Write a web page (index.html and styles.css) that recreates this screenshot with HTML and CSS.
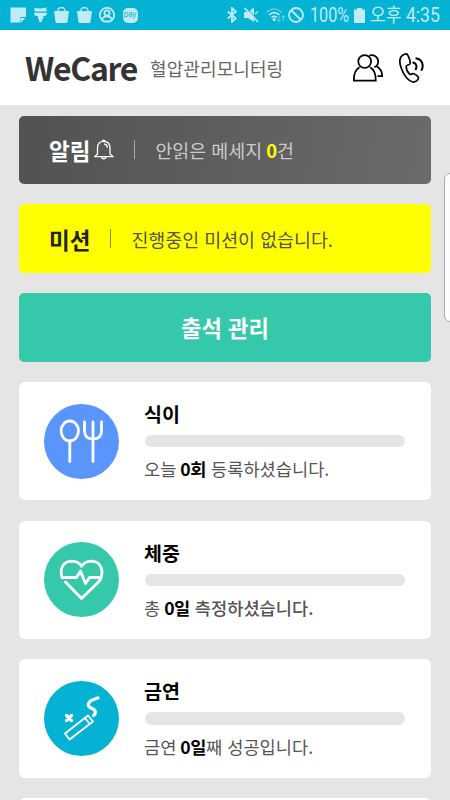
FILE: index.html
```html
<!DOCTYPE html>
<html lang="ko">
<head>
    <meta charset="UTF-8">
    <meta name="viewport" content="width=device-width, initial-scale=1.0">
    <title>WeCare 혈압관리모니터링</title>
    <link rel="stylesheet" href="styles.css">
</head>
<body>
    <div class="status-bar">
        <div class="status-left">
            <svg width="16" height="16" viewBox="0 0 16 16"><path fill="currentColor" d="M.5.500h15.500v9.500h-5.500v5.500H.5z"/><path fill="currentColor" d="M15.500 11l-4.500 4.500V11z"/></svg>
            <svg width="13" height="16" viewBox="0 0 13 16"><path fill="currentColor" d="M.5.500C3 1.500 7 2 12.500.5v4H.5zM0 5.800h13c0 2-.8 3.200-2.500 3.200H9.300v3H8v3H5v-3H4V9H2.500C.8 9 0 7.800 0 5.800z"/></svg>
            <svg width="15" height="16" viewBox="0 0 15 16"><path fill="none" stroke="currentColor" stroke-width="1.300" d="M4 5V3.500a3.500 3 0 0 1 7 0V5"/><path fill="currentColor" d="M0 4h15l-1.400 10.500Q13.400 16 12 16H3Q1.600 16 1.400 14.500z"/></svg>
            <svg width="15" height="16" viewBox="0 0 15 16"><path fill="none" stroke="currentColor" stroke-width="1.300" d="M4 5V3.500a3.500 3 0 0 1 7 0V5"/><path fill="currentColor" d="M0 4h15l-1.400 10.500Q13.400 16 12 16H3Q1.600 16 1.400 14.500z"/></svg>
            <svg class="line" width="16" height="16" viewBox="0 0 16 16"><path d="M5.300 14.600a7.100 7.100 0 1 1 5.400 0"/><circle cx="8" cy="6" r="2.600"/><path d="M3.500 12c1.300-3.500 7.700-3.500 9 0M5 14.500h6"/></svg>
            <span class="pay">pay</span>
        </div>
        <div class="status-right">
            <svg class="line bluetooth" width="10" height="16" viewBox="0 0 10 16"><path d="M.8 4.500l8 7L5 15V1l3.800 3.500-8 7"/></svg>
            <svg class="mute" width="15" height="16" viewBox="0 0 15 16"><path fill="currentColor" d="M0 5h4l6-4.500v14.500L4 11H0z"/><path stroke="#04b2d4" stroke-width="1" d="M2 .5l13 13.500"/><path stroke="currentColor" stroke-width="1.700" d="M.5 1l13.500 14"/><path fill="none" stroke="currentColor" stroke-width="1.300" d="M11 7l3-2.500"/></svg>
            <svg class="wifi" width="20" height="16" viewBox="0 0 20 16"><g fill="none" stroke="currentColor" stroke-width="1.600"><path d="M.7 5.500q7.500-7 15 0" opacity=".45"/><path d="M3 8q5.200-4.800 10.500 0M5.500 10.500q2.700-2.300 5.400 0"/></g><circle cx="8.200" cy="12.500" r="1.600" fill="currentColor"/><path fill="none" stroke="currentColor" opacity=".5" d="M13 9v5.500m-2-2l2 2 2-2M17.500 14V8.500m-2 2l2-2 2 2"/></svg>
            <svg class="line block" width="16" height="16" viewBox="0 0 16 16"><circle cx="8" cy="8" r="7"/><path d="M3 3l10 10"/></svg>
            <span class="battery-text">100%</span>
            <svg class="battery" width="11" height="15" viewBox="0 0 11 15"><path fill="currentColor" d="M3 0h5v1.500h3V15H0V1.500h3z"/></svg>
            <span class="clock"><span class="ampm">오후</span> 4:35</span>
        </div>
    </div>

    <header class="header">
        <h1 class="logo">WeCare</h1>
        <span class="subtitle">혈압관리모니터링</span>
        <div class="header-icons">
            <svg width="30" height="28" viewBox="0 0 30 28"><circle cx="11.700" cy="7.500" r="6.400"/><path d="M6.500 13.300C2.500 15.500.8 19 .8 26.700h22c0-7.700-1.700-11.200-5.700-13.400M16.300 1.500c4.200-1.600 8.900 1.500 8.900 6 0 2.500-1.600 4.800-4 5.800M24 12.500c3.500 2.200 5.200 5 5.200 9.700h-4.700"/></svg>
            <svg width="25" height="30" viewBox="0 0 25 30"><path d="M5.500 1.200C.8 3-.3 8 2.200 15c2.800 8 7.600 13.500 11.600 14 2.500.3 5.600-1.800 5.700-4.200 0-1.600-4-4.300-5.700-4.100-1.800.2-1.900 1.700-3.400.2-1.800-1.800-3.200-5.200-3.200-7.500 0-1.600 2.700-1.100 3.700-2.500 1-1.600-1.200-7.600-2.400-9.200-.6-.9-1.900-.9-3-.5z"/><path class="wave" d="M13.500 9.500c4 .3 5 4.500 2.800 7.500M16.500 5.300c6.800.7 8.800 7.200 5.700 12.500"/></svg>
        </div>
    </header>

    <main class="content">
        <section class="banner alarm">
            <strong>알림</strong>
            <svg class="bell" width="20" height="22" viewBox="0 0 20 22"><path d="M3.500 15V9C3.500 4.500 6 2.300 9.700 2.300S16 4.500 16 9v6l3 2.700H.8zM8.300 2.300a1.500 1.500 0 0 1 2.900 0M7.700 17.700a2.100 2.100 0 1 0 4.200 0M10 5c2 .2 3.300 1.600 3.400 3.800"/></svg>
            <i class="divider"></i>
            <p>안읽은 메세지 <b>0</b>건</p>
        </section>

        <section class="banner mission">
            <strong>미션</strong>
            <i class="divider"></i>
            <p>진행중인 미션이 없습니다.</p>
        </section>

        <a class="banner attendance">출석 관리</a>

        <section class="card">
            <div class="circle diet">
                <svg width="75" height="75" viewBox="0 0 75 75"><ellipse cx="25.800" cy="27" rx="8.700" ry="10"/><path d="M25.800 37v20.500M49 18v39.500M40.500 18v8.500q0 8.500 8.500 8.500t8.500-8.500V18"/></svg>
            </div>
            <div class="info">
                <h2>식이</h2>
                <div class="bar"></div>
                <p>오늘 <b>0회</b> 등록하셨습니다.</p>
            </div>
        </section>

        <section class="card">
            <div class="circle weight">
                <svg width="75" height="75" viewBox="0 0 75 75"><path d="M18 35.500C15.200 26 20 19.500 27 19.200c5 0 8.500 1.800 10.500 5 2-3.200 5.500-5 10.500-5 7 .3 12 6.800 9.200 16.300-.6 2-1.700 3.500-3 4.800L37.500 56.500 21.500 40M18 35.500h14.500l4-6.500 5 12.500 4-6h11.500"/></svg>
            </div>
            <div class="info">
                <h2>체중</h2>
                <div class="bar"></div>
                <p class="medium">총 <b>0일</b> <span>측정하셨습니다.</span></p>
            </div>
        </section>

        <section class="card">
            <div class="circle smoke">
                <svg width="75" height="75" viewBox="0 0 75 75"><path class="thin" d="M21 52.500L44 34.500l5 6L25.500 58.500zM41 37l4.700 6"/><path class="thick" d="M49.500 34.500C52.500 32 52 29 48 27.500s-5-4.500-1.500-7.500c2-1.700 4.500-2 7.500-3"/><path class="thick" d="M22.500 34.500l5 5M27.500 34.500l-5 5"/></svg>
            </div>
            <div class="info">
                <h2>금연</h2>
                <div class="bar"></div>
                <p>금연 <b>0일</b>째 성공입니다.</p>
            </div>
        </section>

        <section class="card"></section>
    </main>

    <div class="edge-handle"></div>
</body>
</html>
```

FILE: styles.css
```css
* {
    box-sizing: border-box;
}
body {
    display: flex;
    flex-direction: column;
    margin: 0;
    height: 800px;
    overflow: hidden;
    position: relative;
    background: #e5e5e5;
    color: #333;
    font-family: "Noto Sans CJK KR", "Noto Sans", sans-serif;
}
h1, h2, p {
    margin: 0;
}
svg {
    display: block;
    flex: none;
}

/* status bar */
.status-bar {
    display: flex;
    flex: none;
    justify-content: space-between;
    height: 30px;
    padding: 0 11px 0 10px;
    background: #04b2d4;
    color: #c0ebf4;
}
.status-left,
.status-right {
    display: flex;
    align-items: center;
}
.status-left {
    gap: 7.500px;
}
.line {
    fill: none;
    stroke: currentColor;
    stroke-width: 1.800;
}
.pay {
    width: 15px;
    height: 15px;
    border-radius: 5px;
    background: #c0ebf4;
    color: #04b2d4;
    font: 7.500px/13px Inter, sans-serif;
    letter-spacing: -.2px;
    text-align: center;
}
.mute {
    margin-left: 7px;
}
.wifi {
    margin-left: 7px;
}
.block {
    margin-left: 2px;
}
.battery-text,
.clock {
    font-family: Roboto, "Noto Sans CJK KR", sans-serif;
    font-size: 20px;
    line-height: 30px;
    white-space: nowrap;
    transform-origin: left;
}
.battery-text {
    width: 38px;
    margin-left: 6px;
    transform: scaleX(.81);
}
.battery {
    margin-left: 6px;
}
.clock {
    width: 69px;
    margin-left: 5px;
    transform: scaleX(.88);
}
.ampm {
    font-size: 19.500px;
}

/* header */
.header {
    display: flex;
    flex: none;
    align-items: center;
    height: 75px;
    padding: 0 26px 0 25px;
    background: #fff;
}
.logo {
    width: 125px;
    font-size: 32px;
    line-height: 75px;
    letter-spacing: -1.300px;
}
.subtitle {
    font-size: 18px;
    letter-spacing: .1px;
    color: #666;
}
.header-icons {
    display: flex;
    align-items: center;
    gap: 16px;
    margin-left: auto;
}
.header-icons svg {
    fill: none;
    stroke: #000;
    stroke-width: 1.700;
}
.header-icons .wave {
    stroke-width: 2;
}

/* main list */
.content {
    display: flex;
    flex: 1;
    min-height: 0;
    flex-direction: column;
    gap: 20.300px;
    padding: 10.500px 19px 0;
    overflow: hidden;
}
.banner {
    display: flex;
    flex: none;
    align-items: center;
    height: 68.500px;
    padding: 0 30px;
    border-radius: 5px;
    font-size: 18.400px;
    white-space: nowrap;
}
.banner strong {
    font-size: 22.500px;
}
.divider {
    width: 1px;
    height: 19px;
    margin: 0 20px;
    background: currentColor;
    opacity: .7;
}
.alarm {
    background: linear-gradient(100deg, #525252, #6b6b6b);
    color: #ccc;
}
.alarm strong {
    color: #fff;
}
.alarm b {
    margin-left: -1px;
    color: #ff0;
}
.bell {
    margin-left: 4px;
    fill: none;
    stroke: #fff;
    stroke-width: 1.300;
}
.mission {
    background: #ff0;
    color: #555;
}
.mission strong {
    color: #222;
}
.attendance {
    justify-content: center;
    background: #36c8ab;
    color: #fff;
    font-size: 22.200px;
    font-weight: bold;
}
.card {
    display: flex;
    flex: none;
    align-items: center;
    height: 118.500px;
    padding: 0 26px 0 25px;
    border-radius: 6px;
    background: #fff;
}
.circle {
    width: 75px;
    height: 75px;
    border-radius: 50%;
}
.circle svg {
    fill: none;
    stroke: #fff;
    stroke-width: 2.800;
    stroke-linecap: round;
    stroke-linejoin: round;
}
.circle .thin {
    stroke-width: 1.900;
}
.circle .thick {
    stroke-width: 3.200;
}
.diet {
    background: #5a95fb;
}
.weight {
    background: #36c8ab;
}
.smoke {
    background: #04b2d4;
}
.info {
    flex: 1;
    margin-left: 25px;
    color: #555;
}
.info h2 {
    font-size: 19.500px;
    line-height: 32px;
    color: #000;
}
.bar {
    height: 12.500px;
    margin: 5px 0 6px 1px;
    border-radius: 7px;
    background: #e5e5e5;
}
.info p {
    font-size: 17.600px;
    line-height: 31px;
    white-space: nowrap;
}
.info b {
    margin-left: -1px;
    color: #000;
    letter-spacing: -.4px;
}
.medium span {
    font-weight: 500;
}

/* edge panel handle on the right side of the screen */
.edge-handle {
    position: absolute;
    top: 173px;
    right: -8px;
    width: 14px;
    height: 149px;
    border: 1px solid #aaa;
    border-radius: 6px;
    background: #fcfcfc;
}
```
